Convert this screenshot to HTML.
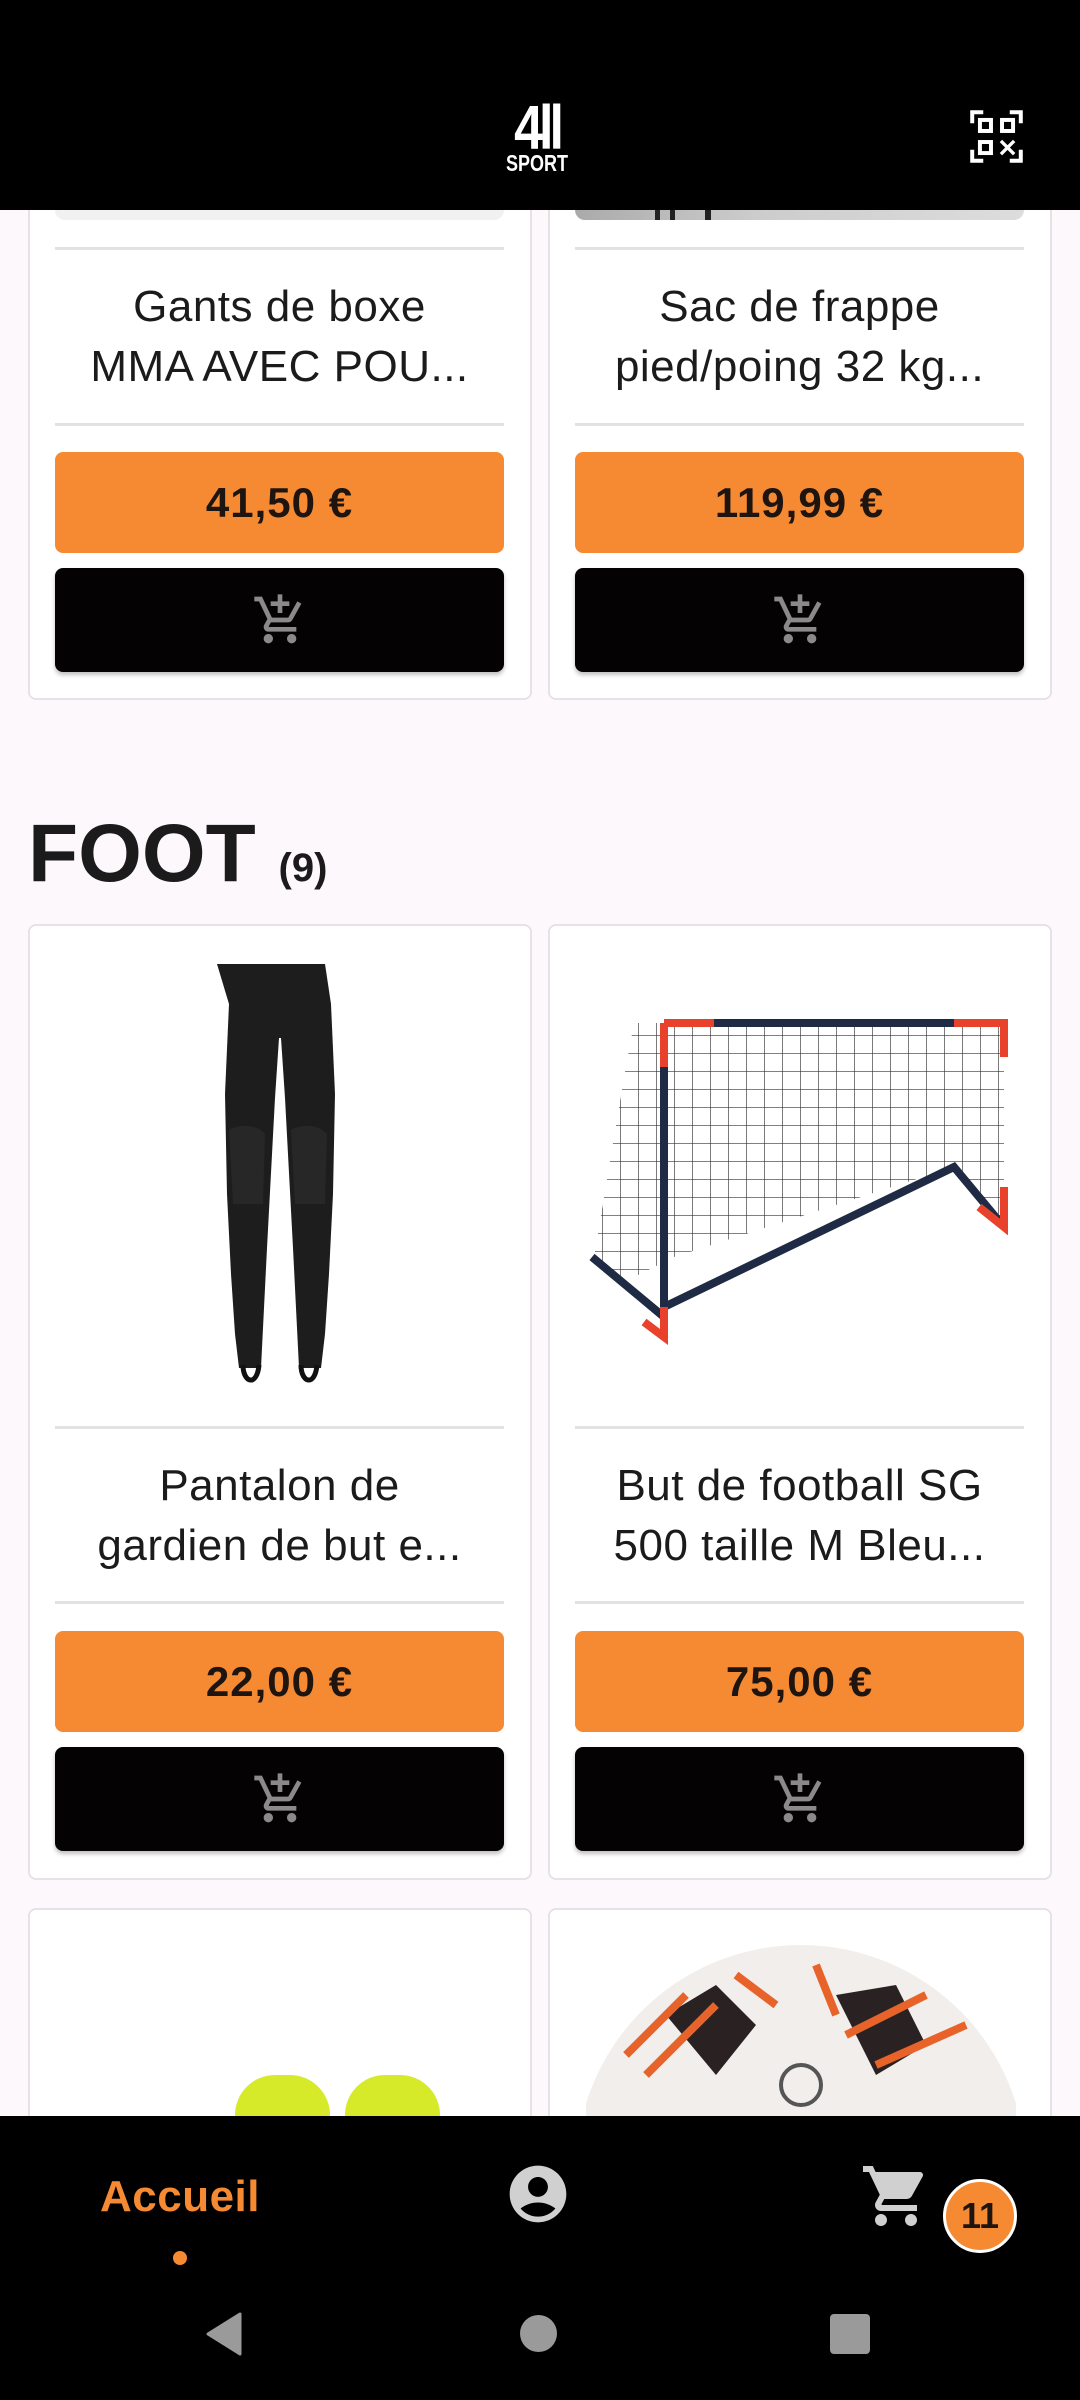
<!DOCTYPE html>
<html><head><meta charset="utf-8"><style>
*{margin:0;padding:0;box-sizing:border-box}
body{width:1080px;height:2400px;background:#fcf8fb;position:relative;overflow:hidden;font-family:"Liberation Sans",sans-serif}
.abs{position:absolute}
.card{position:absolute;background:#fff;border:2px solid #e6e2e5;border-radius:8px}
.hr{position:absolute;height:3px;background:#e2e2e2}
.title{position:absolute;text-align:center;font-size:44px;line-height:60px;color:#1b1b1b;letter-spacing:0.5px;white-space:nowrap}
.price{position:absolute;background:#f68a33;border-radius:8px;text-align:center;font-weight:bold;font-size:42px;letter-spacing:1px;color:#1e1410;display:flex;align-items:center;justify-content:center}
.cart{position:absolute;background:#050203;border-radius:8px;display:flex;align-items:center;justify-content:center;box-shadow:0 3px 4px rgba(0,0,0,.25)}
</style></head><body>

<div class="card" style="left:28px;top:150px;width:504px;height:550px"></div>
<div class="card" style="left:548px;top:150px;width:504px;height:550px"></div>
<div class="abs" style="left:55px;top:190px;width:449px;height:30px;background:#f1f1f1;border-radius:0 0 10px 10px"></div>
<div class="abs" style="left:575px;top:190px;width:449px;height:30px;background:linear-gradient(90deg,#aaa,#ccc 40%,#ddd);border-radius:0 0 10px 10px"></div>
<div class="abs" style="left:655px;top:190px;width:5px;height:30px;background:#222"></div>
<div class="abs" style="left:670px;top:190px;width:5px;height:30px;background:#222"></div>
<div class="abs" style="left:705px;top:190px;width:6px;height:30px;background:#222"></div>

<div class="hr" style="left:55px;top:247px;width:449px"></div>
<div class="hr" style="left:575px;top:247px;width:449px"></div>
<div class="title" style="left:55px;top:277px;width:449px">Gants de boxe<br>MMA AVEC POU...</div>
<div class="title" style="left:575px;top:277px;width:449px">Sac de frappe<br>pied/poing 32 kg...</div>
<div class="hr" style="left:55px;top:423px;width:449px"></div>
<div class="hr" style="left:575px;top:423px;width:449px"></div>
<div class="price" style="left:55px;top:452px;width:449px;height:101px">41,50 €</div>
<div class="price" style="left:575px;top:452px;width:449px;height:101px">119,99 €</div>
<div class="cart" style="left:55px;top:568px;width:449px;height:104px"><svg width="56" height="56" viewBox="0 0 24 24"><path fill="#8a8a8a" d="M11 9h2V6h3V4h-3V1h-2v3H8v2h3v3zm-4 9c-1.1 0-2 .9-2 2s.9 2 2 2 2-.9 2-2-.9-2-2-2zm10 0c-1.1 0-2 .9-2 2s.9 2 2 2 2-.9 2-2-.9-2-2-2zm-9.83-3.25l.03-.12.9-1.63h7.45c.75 0 1.41-.41 1.75-1.03l3.86-7.01L19.42 4l-3.87 7H8.53L4.27 2H1v2h2l3.6 7.59-1.35 2.44C4.52 15.37 5.48 17 7 17h12v-2H7.420c-.13 0-.25-.11-.25-.25z"/></svg></div>
<div class="cart" style="left:575px;top:568px;width:449px;height:104px"><svg width="56" height="56" viewBox="0 0 24 24"><path fill="#8a8a8a" d="M11 9h2V6h3V4h-3V1h-2v3H8v2h3v3zm-4 9c-1.1 0-2 .9-2 2s.9 2 2 2 2-.9 2-2-.9-2-2-2zm10 0c-1.1 0-2 .9-2 2s.9 2 2 2 2-.9 2-2-.9-2-2-2zm-9.83-3.25l.03-.12.9-1.63h7.45c.75 0 1.41-.41 1.75-1.03l3.86-7.01L19.42 4l-3.87 7H8.53L4.27 2H1v2h2l3.6 7.59-1.35 2.44C4.52 15.37 5.48 17 7 17h12v-2H7.42c-.13 0-.25-.11-.25-.25z"/></svg></div>

<div class="abs" style="left:0;top:0;width:1080px;height:210px;background:#000"></div>
<div class="abs" style="left:500px;top:92px;width:74px;text-align:center;color:#fff;font-weight:bold;font-size:52px;line-height:60px;letter-spacing:-4px;transform:scaleY(1.2);transform-origin:top">4ll</div>
<div class="abs" style="left:500px;top:153px;width:74px;text-align:center;color:#fff;font-weight:bold;font-size:18px;line-height:20px;transform:scaleY(1.3)">SPORT</div>
<svg class="abs" style="left:970px;top:110px" width="53" height="53" viewBox="0 0 24 24" fill="none" stroke="#fff" stroke-width="1.8"><path d="M1 6V1h5M18 1h5v5M1 18v5h5M23 18v5h-5"/><rect x="4.5" y="4.5" width="5" height="5"/><rect x="14.5" y="4.5" width="5" height="5"/><rect x="4.5" y="14.5" width="5" height="5"/><path d="M14 14l6 6M20 14l-6 6" stroke-width="1.5"/></svg>

<div class="abs" style="left:28px;top:806px;font-weight:bold;font-size:82px;line-height:96px;color:#1b1b1b">FOOT <span style="font-size:40px">(9)</span></div>

<div class="card" style="left:28px;top:924px;width:504px;height:956px"></div>
<div class="card" style="left:548px;top:924px;width:504px;height:956px"></div>
<svg class="abs" style="left:205px;top:960px" width="150" height="435" viewBox="0 0 150 435">
<path fill="#1d1d1d" d="M12 4h108l6 40 4 90-2 100-4 80-4 60-4 34h-22l-2-40-4-80-8-150-4-60h-2l-4 60-8 150-4 80-2 40h-22l-4-34-4-60-4-80-2-100 4-90z"/>
<path fill="#272727" d="M24 170c10-6 28-6 36 4l-2 70-30 0zM86 170c10-6 28-6 36 4l-2 70-30 0z"/>
<path fill="none" stroke="#111" stroke-width="5" d="M38 405c0 18 14 22 16 0M96 405c0 18 14 22 16 0"/>
</svg>
<svg class="abs" style="left:584px;top:1017px" width="432" height="328" viewBox="0 0 432 328">
<defs><pattern id="n" width="18" height="18" patternUnits="userSpaceOnUse"><path d="M0 0H18M0 0V18" stroke="#333" stroke-width="1.3" fill="none"/></pattern></defs>
<path fill="url(#n)" d="M50 6L420 6L420 210L370 150L90 240L30 270L10 240L40 60z"/>
<path fill="none" stroke="#1f2a44" stroke-width="8" d="M80 6H420M80 6V320M8 240L80 300M80 290L370 150L420 210"/>
<path fill="none" stroke="#e8412c" stroke-width="8" d="M80 6H130M370 6H420V40M420 170V210L395 190M80 290V320L60 305M80 6V50"/>
</svg>
<div class="hr" style="left:55px;top:1426px;width:449px"></div>
<div class="hr" style="left:575px;top:1426px;width:449px"></div>
<div class="title" style="left:55px;top:1456px;width:449px">Pantalon de<br>gardien de but e...</div>
<div class="title" style="left:575px;top:1456px;width:449px">But de football SG<br>500 taille M Bleu...</div>
<div class="hr" style="left:55px;top:1601px;width:449px"></div>
<div class="hr" style="left:575px;top:1601px;width:449px"></div>
<div class="price" style="left:55px;top:1631px;width:449px;height:101px">22,00 €</div>
<div class="price" style="left:575px;top:1631px;width:449px;height:101px">75,00 €</div>
<div class="cart" style="left:55px;top:1747px;width:449px;height:104px"><svg width="56" height="56" viewBox="0 0 24 24"><path fill="#8a8a8a" d="M11 9h2V6h3V4h-3V1h-2v3H8v2h3v3zm-4 9c-1.1 0-2 .9-2 2s.9 2 2 2 2-.9 2-2-.9-2-2-2zm10 0c-1.1 0-2 .9-2 2s.9 2 2 2 2-.9 2-2-.9-2-2-2zm-9.83-3.25l.03-.12.9-1.63h7.45c.75 0 1.41-.41 1.75-1.03l3.86-7.01L19.42 4l-3.87 7H8.53L4.27 2H1v2h2l3.6 7.59-1.35 2.44C4.52 15.37 5.48 17 7 17h12v-2H7.42c-.13 0-.25-.11-.25-.25z"/></svg></div>
<div class="cart" style="left:575px;top:1747px;width:449px;height:104px"><svg width="56" height="56" viewBox="0 0 24 24"><path fill="#8a8a8a" d="M11 9h2V6h3V4h-3V1h-2v3H8v2h3v3zm-4 9c-1.1 0-2 .9-2 2s.9 2 2 2 2-.9 2-2-.9-2-2-2zm10 0c-1.1 0-2 .9-2 2s.9 2 2 2 2-.9 2-2-.9-2-2-2zm-9.83-3.25l.03-.12.9-1.63h7.45c.75 0 1.41-.41 1.75-1.03l3.86-7.01L19.42 4l-3.87 7H8.53L4.27 2H1v2h2l3.6 7.59-1.35 2.44C4.52 15.37 5.48 17 7 17h12v-2H7.42c-.13 0-.25-.11-.25-.25z"/></svg></div>

<div class="card" style="left:28px;top:1908px;width:504px;height:400px"></div>
<div class="card" style="left:548px;top:1908px;width:504px;height:400px"></div>
<div class="abs" style="left:235px;top:2075px;width:95px;height:60px;background:#d6ea2a;border-radius:40px 40px 0 0"></div>
<div class="abs" style="left:345px;top:2075px;width:95px;height:60px;background:#d6ea2a;border-radius:40px 40px 0 0"></div>
<svg class="abs" style="left:586px;top:1935px" width="430" height="185" viewBox="0 0 430 185">
<defs><clipPath id="c"><rect width="430" height="185"/></clipPath></defs>
<g clip-path="url(#c)"><circle cx="215" cy="235" r="225" fill="#f1eeec"/>
<path fill="#2a2222" d="M80 80l50-30 40 40-40 50zM250 60l60-10 30 60-50 30z"/>
<path fill="none" stroke="#e8632a" stroke-width="8" d="M40 120l60-60M60 140l70-70M260 100l80-40M290 130l90-40M150 40l40 30M230 30l20 50"/>
<circle cx="215" cy="150" r="20" fill="none" stroke="#555" stroke-width="4"/></g></svg>

<div class="abs" style="left:0;top:2116px;width:1080px;height:284px;background:#000"></div>
<div class="abs" style="left:60px;top:2172px;width:240px;text-align:center;color:#f68a33;font-weight:bold;font-size:44px;letter-spacing:0.5px">Accueil</div>
<div class="abs" style="left:173px;top:2251px;width:14px;height:14px;border-radius:50%;background:#f68a33"></div>
<svg class="abs" style="left:504px;top:2160px" width="68" height="68" viewBox="0 0 24 24"><path fill="#d0d0d0" d="M12 2C6.48 2 2 6.48 2 12s4.48 10 10 10 10-4.48 10-10S17.52 2 12 2zm0 4c1.93 0 3.5 1.57 3.5 3.5S13.93 13 12 13s-3.5-1.57-3.5-3.5S10.07 6 12 6zm0 14c-2.03 0-4.43-.82-6.14-2.88C7.55 15.8 9.68 15 12 15s4.45.8 6.14 2.12C16.43 19.18 14.03 20 12 20z"/></svg>
<svg class="abs" style="left:860px;top:2160px" width="72" height="72" viewBox="0 0 24 24"><path fill="#d0d0d0" d="M7 18c-1.1 0-2 .9-2 2s.9 2 2 2 2-.9 2-2-.9-2-2-2zM1 2v2h2l3.6 7.59-1.35 2.45c-.16.28-.25.61-.25.96 0 1.1.9 2 2 2h12v-2H7.42c-.14 0-.25-.11-.25-.25l.03-.12.9-1.63h7.45c.75 0 1.41-.41 1.75-1.03l3.58-6.49A1 1 0 0 0 20 4H5.21l-.94-2H1zm16 16c-1.1 0-2 .9-2 2s.9 2 2 2 2-.9 2-2-.9-2-2-2z"/></svg>
<div class="abs" style="left:943px;top:2179px;width:74px;height:74px;border-radius:50%;background:#f68a33;border:3px solid #fff;color:#1e1410;font-weight:bold;font-size:36px;line-height:68px;text-align:center">11</div>
<svg class="abs" style="left:204px;top:2312px" width="40" height="44" viewBox="0 0 40 44"><path fill="#9a9a9a" d="M36 2L4 22l32 20z" stroke="#9a9a9a" stroke-width="3" stroke-linejoin="round"/></svg>
<div class="abs" style="left:520px;top:2315px;width:37px;height:37px;border-radius:50%;background:#9a9a9a"></div>
<div class="abs" style="left:830px;top:2314px;width:40px;height:40px;border-radius:4px;background:#9a9a9a"></div>
</body></html>
